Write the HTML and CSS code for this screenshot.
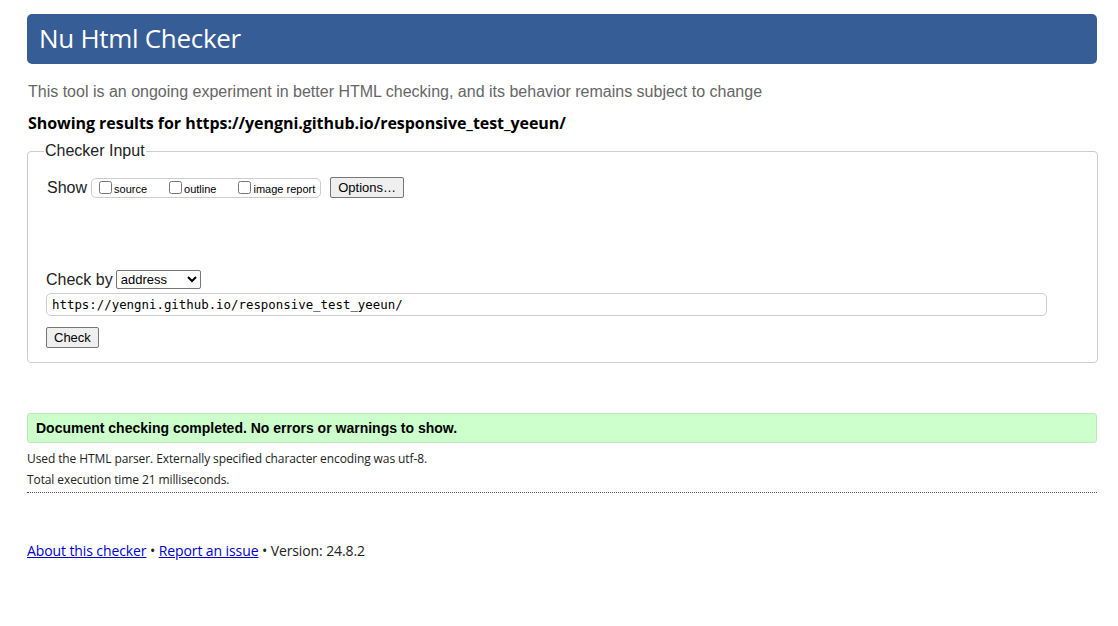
FILE: index.html
```html
<!DOCTYPE html>
<html lang="en">
<head>
<meta charset="utf-8">
<title>Nu Html Checker</title>
<link rel="stylesheet" href="styles.css">
</head>
<body>
<div class="page">
  <h1 class="title">Nu Html Checker</h1>
  <p class="intro">This tool is an ongoing experiment in better HTML checking, and its behavior remains subject to change</p>
  <p class="showing">Showing results for https://yengni.github.io/responsive_test_yeeun/</p>
  <fieldset class="input">
    <legend class="legend">Checker Input</legend>
    <div class="show-row">
      <span class="show-label">Show</span>
      <fieldset class="show-opts">
        <label class="opt"><input type="checkbox" class="cb"><span>source</span></label>
        <label class="opt"><input type="checkbox" class="cb"><span>outline</span></label>
        <label class="opt"><input type="checkbox" class="cb"><span>image report</span></label>
      </fieldset>
      <button class="btn options">Options…</button>
    </div>
    <div class="check-row">
      <span class="check-label">Check by</span>
      <select class="sel"><option>address</option></select>
    </div>
    <input class="url" type="text" value="https://yengni.github.io/responsive_test_yeeun/">
    <div class="submit-row"><button class="btn check">Check</button></div>
  </fieldset>
  <div class="success">Document checking completed. No errors or warnings to show.</div>
  <p class="details">Used the HTML parser. Externally specified character encoding was utf-8.</p>
  <p class="details">Total execution time 21 milliseconds.</p>
  <hr class="rule">
  <p class="footer"><a href="#">About this checker</a> • <a href="#">Report an issue</a> • Version: 24.8.2</p>
</div>
</body>
</html>
```
FILE: styles.css
```css
html, body { margin: 0; padding: 0; background: #fff; }
body { font-family: "Liberation Sans", Arial, sans-serif; color: #000; }
.page { padding: 14px 21px 0 27px; }
.title {
  margin: 0;
  background: #365d95;
  color: #fff;
  border-radius: 5px;
  height: 50px;
  line-height: 49px;
  padding: 0 12px;
  font-family: "Open Sans", sans-serif;
  font-weight: 400;
  font-size: 26px;
  letter-spacing: -0.3px;
}
.intro {
  margin: 18px 0 0 1px;
  color: #666;
  font-size: 16px;
  line-height: 20px;
}
.showing {
  margin: 10px 0 0 1px;
  font-family: "Open Sans", sans-serif;
  font-weight: 700;
  font-size: 16px;
  line-height: 22px;
  letter-spacing: -0.05px;
}
.input {
  margin: 8px 0 0 0;
  border: 1px solid #ccc;
  border-radius: 4px;
  padding: 8px 50px 14px 18px;
  min-height: 0;
}
.legend { font-size: 16px; padding: 0 1px; color: #222; margin-left: -2px; }
.show-row { display: flex; align-items: center; margin-top: 9px; }
.show-label { font-size: 16px; margin-right: 3px; color: #222; margin-left: 1px; }
.show-opts {
  display: flex;
  gap: 0;
  border: 1px solid #ccc;
  border-radius: 5px;
  margin: 0 0 0 1px;
  padding: 1px 5px 2px 5px;
  min-width: 0;
}
.opt { display: flex; align-items: center; font-size: 11px; margin-right: 20px; }
.opt:last-child { margin-right: 0; }
.cb { margin: 0 2px 0 2px; width: 13px; height: 13px; }
.opt span { margin-top: 3px; }
.btn {
  font-family: "Liberation Sans", Arial, sans-serif;
  font-size: 13px;
  background: #efefef;
  border: 1px solid #767676;
  border-radius: 2px;
  color: #000;
  padding: 1px 6px;
}
.options { margin-left: 9px; height: 21px; padding: 0 7px; }
.check-row { display: flex; align-items: center; margin-top: 72px; }
.check-label { font-size: 16px; margin-right: 3px; color: #222; }
.sel {
  font-family: "Liberation Sans", Arial, sans-serif;
  font-size: 13px;
  width: 85px;
  height: 19px;
  border: 1px solid #767676;
  border-radius: 2px;
  background: #fff;
}
.url {
  display: block;
  box-sizing: border-box;
  width: 1001px;
  height: 23px;
  margin: 4px 0 0 0;
  border: 1px solid #ccc;
  border-radius: 5px;
  padding: 0 5px;
  font-family: "DejaVu Sans Mono", monospace;
  font-size: 12.4px;
  color: #000;
}
.submit-row { margin-top: 11px; }
.check { height: 21px; padding: 0 7px; }
.success {
  margin-top: 50px;
  background: #ccffcc;
  border: 1px solid #bdeabd;
  border-radius: 3px;
  height: 28px;
  line-height: 28px;
  padding: 0 8px;
  font-weight: 700;
  font-size: 14px;
}
.details {
  margin: 0;
  font-family: "Open Sans", sans-serif;
  font-size: 12px;
  line-height: 21px;
  letter-spacing: -0.1px;
  color: #222;
}
.success + .details { margin-top: 5px; }
.rule {
  margin: 2px 0 0 0;
  border: 0;
  border-top: 1px dotted #555;
  height: 0;
}
.footer {
  margin: 48px 0 0 0;
  font-family: "Open Sans", sans-serif;
  font-size: 14px;
  letter-spacing: -0.1px;
  color: #222;
}
.footer a { color: #00c; }
```
